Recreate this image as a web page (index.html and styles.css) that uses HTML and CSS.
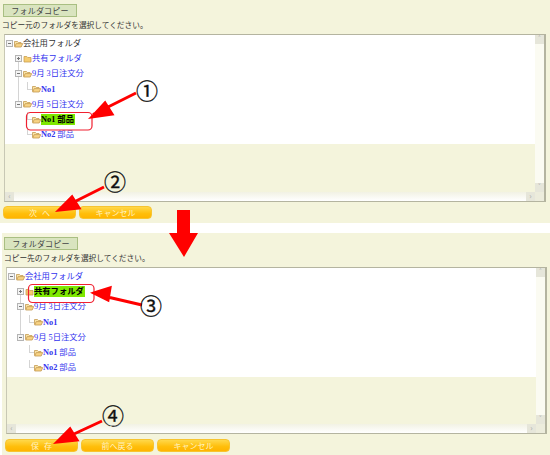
FILE: index.html
```html
<!DOCTYPE html>
<html lang="ja">
<head>
  <meta charset="UTF-8">
  <title>フォルダコピー</title>
  <link rel="stylesheet" href="styles.css">
</head>
<body>
  <svg class="defs" width="0" height="0">
    <symbol id="open" viewBox="0 0 9 8">
      <path d="M0.5 6.5V1.5H3.5L4.5 2.5H7V3.5" fill="#f9e3a6" stroke="#c49a52" stroke-width="0.8"/>
      <path d="M0.7 7L2.2 3.6H8.7L7.2 7Z" fill="#f7d284" stroke="#c49a52" stroke-width="0.8"/>
    </symbol>
    <symbol id="closed" viewBox="0 0 9 8">
      <path d="M1 7V1.5H3.8L4.8 2.5H8V7Z" fill="#f5cc70" stroke="#c9a050" stroke-width="0.8"/>
    </symbol>
    <symbol id="plus" viewBox="0 0 7 7">
      <rect x="0.5" y="0.5" width="6" height="6" fill="#f4f4f4" stroke="#b4b4b4"/>
      <path d="M2 3.5H5M3.5 2V5" stroke="#777" fill="none"/>
    </symbol>
    <symbol id="minus" viewBox="0 0 7 7">
      <rect x="0.5" y="0.5" width="6" height="6" fill="#f4f4f4" stroke="#b4b4b4"/>
      <path d="M2 3.5H5" stroke="#777" fill="none"/>
    </symbol>
  </svg>

  <div class="shot">
    <!-- コピー元 -->
    <section class="panel">
      <h2 class="tag">フォルダコピー</h2>
      <p class="msg">コピー元のフォルダを選択してください。</p>
      <div class="box">
        <div class="box-main">
          <div class="tree">
            <div class="row root">
              <span class="cell"><svg class="toggle"><use href="#minus"/></svg></span>
              <span class="cell"><svg class="folder"><use href="#open"/></svg></span>
              <span class="label">会社用フォルダ</span>
            </div>
            <div class="row">
              <span class="cell"></span>
              <span class="cell guide-start"><svg class="toggle"><use href="#plus"/></svg></span>
              <span class="cell"><svg class="folder"><use href="#closed"/></svg></span>
              <span class="label">共有フォルダ</span>
            </div>
            <div class="row">
              <span class="cell"></span>
              <span class="cell guide"><svg class="toggle"><use href="#minus"/></svg></span>
              <span class="cell"><svg class="folder"><use href="#open"/></svg></span>
              <span class="label">9月 3日注文分</span>
            </div>
            <div class="row">
              <span class="cell"></span>
              <span class="cell guide"></span>
              <span class="cell elbow"></span>
              <span class="cell"><svg class="folder"><use href="#open"/></svg></span>
              <span class="label"><b>No1</b></span>
            </div>
            <div class="row">
              <span class="cell"></span>
              <span class="cell guide-end"><svg class="toggle"><use href="#minus"/></svg></span>
              <span class="cell"><svg class="folder"><use href="#open"/></svg></span>
              <span class="label">9月 5日注文分</span>
            </div>
            <div class="row">
              <span class="cell"></span>
              <span class="cell"></span>
              <span class="cell elbow"></span>
              <span class="cell"><svg class="folder"><use href="#open"/></svg></span>
              <span class="label selected"><b>No1 部品</b></span>
            </div>
            <div class="row">
              <span class="cell"></span>
              <span class="cell"></span>
              <span class="cell elbow"></span>
              <span class="cell"><svg class="folder"><use href="#open"/></svg></span>
              <span class="label"><b>No2</b> 部品</span>
            </div>
          </div>
          <div class="fill"></div>
        </div>
        <div class="vbar">
          <span class="sbtn">&#x2C4;</span>
          <span class="sbtn">&#x2C5;</span>
        </div>
        <div class="hbar">
          <span class="sbtn">&#x2039;</span>
          <span class="sbtn">&#x203A;</span>
        </div>
        <div class="corner"></div>
      </div>
      <div class="buttons">
        <button class="btn btn-spaced">次 へ</button>
        <button class="btn">キャンセル</button>
      </div>
    </section>

    <!-- コピー先 -->
    <section class="panel panel-dest">
      <h2 class="tag">フォルダコピー</h2>
      <p class="msg">コピー先のフォルダを選択してください。</p>
      <div class="box">
        <div class="box-main">
          <div class="tree">
            <div class="row">
              <span class="cell"><svg class="toggle"><use href="#minus"/></svg></span>
              <span class="cell"><svg class="folder"><use href="#open"/></svg></span>
              <span class="label">会社用フォルダ</span>
            </div>
            <div class="row">
              <span class="cell"></span>
              <span class="cell guide-start"><svg class="toggle"><use href="#plus"/></svg></span>
              <span class="cell"><svg class="folder"><use href="#closed"/></svg></span>
              <span class="label selected"><b>共有フォルダ</b></span>
            </div>
            <div class="row">
              <span class="cell"></span>
              <span class="cell guide"><svg class="toggle"><use href="#minus"/></svg></span>
              <span class="cell"><svg class="folder"><use href="#open"/></svg></span>
              <span class="label">9月 3日注文分</span>
            </div>
            <div class="row">
              <span class="cell"></span>
              <span class="cell guide"></span>
              <span class="cell elbow"></span>
              <span class="cell"><svg class="folder"><use href="#open"/></svg></span>
              <span class="label"><b>No1</b></span>
            </div>
            <div class="row">
              <span class="cell"></span>
              <span class="cell guide-end"><svg class="toggle"><use href="#minus"/></svg></span>
              <span class="cell"><svg class="folder"><use href="#open"/></svg></span>
              <span class="label">9月 5日注文分</span>
            </div>
            <div class="row">
              <span class="cell"></span>
              <span class="cell"></span>
              <span class="cell elbow"></span>
              <span class="cell"><svg class="folder"><use href="#open"/></svg></span>
              <span class="label"><b>No1</b> 部品</span>
            </div>
            <div class="row">
              <span class="cell"></span>
              <span class="cell"></span>
              <span class="cell elbow"></span>
              <span class="cell"><svg class="folder"><use href="#open"/></svg></span>
              <span class="label"><b>No2</b> 部品</span>
            </div>
          </div>
          <div class="fill"></div>
        </div>
        <div class="vbar">
          <span class="sbtn">&#x2C4;</span>
          <span class="sbtn">&#x2C5;</span>
        </div>
        <div class="hbar">
          <span class="sbtn">&#x2039;</span>
          <span class="sbtn">&#x203A;</span>
        </div>
        <div class="corner"></div>
      </div>
      <div class="buttons">
        <button class="btn btn-spaced">保 存</button>
        <button class="btn">前へ戻る</button>
        <button class="btn">キャンセル</button>
      </div>
    </section>

    <!-- 説明の矢印と番号 -->
    <svg class="notes" width="550" height="455" viewBox="0 0 550 455">
      <rect class="ring" x="26.5" y="112.5" width="65.5" height="17.5" rx="4"/>
      <rect class="ring" x="28.5" y="284.5" width="65.5" height="18" rx="4"/>
      <path class="pointer" d="M136 93L93 114.5M92 117L105 103L112 114Z"/>
      <path class="pointer" d="M104 187L63 207.5M59 210L72 197L79 208Z"/>
      <path class="pointer" d="M142 305L99 295M94 293L110 288L108 300Z"/>
      <path class="pointer" d="M102 421L61 440M57 442L70 429L77 440Z"/>
      <path class="big" d="M177 210H190V233H198L184 257L169 233H177Z"/>
      <text class="num" x="147" y="99">①</text>
      <text class="num" x="115" y="190">②</text>
      <text class="num" x="151" y="314">③</text>
      <text class="num" x="113" y="424">④</text>
    </svg>
  </div>
</body>
</html>
```

FILE: styles.css
```css
* {
  box-sizing: border-box;
}

html, body {
  margin: 0;
  padding: 0;
  background-color: #fff;
  font-family: "Noto Sans CJK JP", "Noto Sans", sans-serif;
}

.defs {
  display: block;
  height: 0;
}

.shot {
  position: relative;
  width: 550px;
  height: 455px;
  overflow: hidden;
}

.panel {
  height: 223px;
  margin-bottom: 10px;
  padding: 4px 0 0 3px;
  background-color: #f4f4dc;
}

.panel-dest {
  height: 222px;
  margin-bottom: 0;
  margin-left: 2px;
  padding-left: 2px;
}

.tag {
  width: 74px;
  height: 13px;
  margin: 0;
  border: 1px solid #a9bf82;
  background-color: #d9e4bf;
  color: #444;
  font-size: 8px;
  font-weight: normal;
  line-height: 11px;
  letter-spacing: 0.2px;
  text-align: center;
}

.msg {
  height: 17px;
  margin: 0 0 0 -1px;
  color: #333;
  font-size: 7.7px;
  line-height: 16px;
  white-space: nowrap;
}

.panel-dest .msg {
  margin-left: 0;
}

.box {
  display: grid;
  grid-template-columns: 1fr 9px;
  grid-template-rows: 157px 9px;
  width: 542px;
  height: 168px;
  margin-left: 1px;
  border: 1px solid #b4b4a0;
  border-right-width: 2px;
  border-left-color: #c8c8b4;
  background-color: #fff;
}

.panel-dest .box {
  width: 541px;
  height: 167px;
  margin-left: 2px;
  grid-template-rows: 156px 9px;
}

.box-main {
  display: flex;
  flex-direction: column;
}

.tree {
  height: 109px;
  padding-top: 1px;
  background-color: #fff;
}

.fill {
  flex: 1;
  background-color: #f4f4dc;
}

.row {
  display: flex;
  align-items: center;
  height: 15.2px;
  font-family: "Liberation Serif", "Noto Sans CJK JP", serif;
  font-size: 8.3px;
  color: #3333ee;
  white-space: nowrap;
}

.row.root {
  color: #333;
}

.cell {
  display: flex;
  flex: none;
  align-items: center;
  justify-content: center;
  width: 9px;
  height: 100%;
}

.guide {
  background: linear-gradient(#d4d4d4, #d4d4d4) 4px 0 / 1px 100% no-repeat;
}

.guide-start {
  background: linear-gradient(#d4d4d4, #d4d4d4) 4px 8px / 1px 8px no-repeat;
}

.guide-end {
  background: linear-gradient(#d4d4d4, #d4d4d4) 4px 0 / 1px 7px no-repeat;
}

.elbow {
  background:
    linear-gradient(#d4d4d4, #d4d4d4) 4px 0 / 1px 8px no-repeat,
    linear-gradient(#d4d4d4, #d4d4d4) 4px 7px / 5px 1px no-repeat;
}

.toggle {
  width: 7px;
  height: 7px;
}

.folder {
  width: 9px;
  height: 8px;
}

.label {
  padding: 0 1px 0 0;
  line-height: 11px;
}

.label b {
  font-weight: bold;
}

.selected {
  background-color: #7fe800;
  color: #000;
}

.vbar {
  display: flex;
  flex-direction: column;
  justify-content: space-between;
  background-color: #fbfbf2;
}

.hbar {
  display: flex;
  justify-content: space-between;
  background: linear-gradient(#f2f2e4, #fff);
}

.sbtn {
  display: block;
  width: 9px;
  height: 9px;
  background-color: #e6e6da;
  color: #aaa;
  font-size: 8px;
  line-height: 8px;
  text-align: center;
}

.corner {
  background-color: #ececdc;
}

.buttons {
  display: flex;
  gap: 3px;
  margin-top: 4px;
}

.panel-dest .buttons {
  margin-top: 5px;
  padding-left: 1px;
}

.btn {
  width: 73px;
  height: 13px;
  padding: 0;
  border: 1px solid #f7c430;
  border-radius: 4px;
  background: linear-gradient(#ffd84a, #ffbe0a 60%, #ffb400);
  color: #fff2c0;
  font-family: inherit;
  font-size: 8px;
  line-height: 10px;
}

.btn-spaced {
  word-spacing: 3px;
}

.notes {
  position: absolute;
  top: 0;
  left: 0;
}

.ring {
  fill: none;
  stroke: #f02030;
  stroke-width: 1.2;
}

.pointer {
  fill: #f00;
  stroke: #f00;
  stroke-width: 3;
}

.big {
  fill: #f00;
}

.num {
  font-family: "Noto Sans CJK JP", sans-serif;
  font-size: 22px;
  fill: #111;
  stroke: #111;
  stroke-width: 0.3;
  text-anchor: middle;
}
```
